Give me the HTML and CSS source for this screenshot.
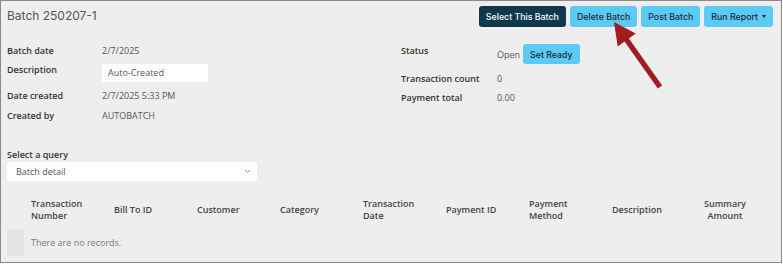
FILE: index.html
```html
<!DOCTYPE html>
<html>
<head>
<meta charset="utf-8">
<link rel="stylesheet" href="styles.css">
</head>
<body>
<div class="frame">
  <div class="topbar">
    <h1 class="title">Batch 250207-1</h1>
    <div class="actions">
      <button class="btn btn-dark">Select This Batch</button>
      <button class="btn btn-light">Delete Batch</button>
      <button class="btn btn-light">Post Batch</button>
      <button class="btn btn-light">Run Report <span class="caret"></span></button>
    </div>
  </div>

  <div class="details">
    <div class="fields fields-left">
      <div class="label r1">Batch date</div><div class="value r1">2/7/2025</div>
      <div class="label r2">Description</div><div class="value r2"><div class="input">Auto-Created</div></div>
      <div class="label r3">Date created</div><div class="value r3">2/7/2025 5:33 PM</div>
      <div class="label r4">Created by</div><div class="value r4">AUTOBATCH</div>
    </div>
    <div class="fields fields-right">
      <div class="label s1">Status</div><div class="value s1 status"><span>Open</span><button class="btn btn-light btn-small">Set Ready</button></div>
      <div class="label s2">Transaction count</div><div class="value s2">0</div>
      <div class="label s3">Payment total</div><div class="value s3">0.00</div>
    </div>
  </div>

  <div class="query">
    <div class="query-label">Select a query</div>
    <div class="select"><span>Batch detail</span><svg class="chev" width="7" height="5" viewBox="0 0 7 5"><path d="M1 1 L3.5 3.5 L6 1" fill="none" stroke="#888" stroke-width="1"/></svg></div>
  </div>

  <div class="table">
    <div class="th"></div>
    <div class="th">Transaction<br>Number</div>
    <div class="th">Bill To ID</div>
    <div class="th">Customer</div>
    <div class="th">Category</div>
    <div class="th">Transaction<br>Date</div>
    <div class="th">Payment ID</div>
    <div class="th">Payment<br>Method</div>
    <div class="th">Description</div>
    <div class="th center">Summary<br>Amount</div>
    <div class="td-box"></div>
    <div class="td-empty">There are no records.</div>
  </div>

  <svg class="arrow" width="783" height="264" viewBox="0 0 783 264">
    <polygon fill="#a31c22" points="614,22 635.7,33.6 628.9,38.4 662.2,85.4 657.8,88.6 624.5,41.6 617.7,46.4"/>
  </svg>
</div>
</body>
</html>
```

FILE: styles.css
```css
* { box-sizing: border-box; }
html, body { margin: 0; padding: 0; background: #ffffff; }
body { font-family: "Open Sans", "Liberation Sans", sans-serif; }

.frame {
  position: relative;
  width: 782px;
  height: 263px;
  border: 1px solid #8a8a8a;
  background: #eeeeee;
  overflow: hidden;
}

.topbar {
  display: flex;
  justify-content: space-between;
  align-items: flex-start;
  padding: 5px 8px 0 6px;
  height: 42px;
}
.title {
  margin: 3px 0 0 0;
  font-family: "Inter", "Liberation Sans", sans-serif;
  font-weight: 400;
  font-size: 12px;
  color: #555555;
  line-height: 14px;
}
.actions { display: flex; gap: 4px; }
.btn {
  font-family: "Inter", "Liberation Sans", sans-serif;
  font-size: 8.8px;
  font-weight: 500;
  height: 21px;
  border: none;
  border-radius: 3px;
  padding: 0 7px;
  cursor: pointer;
  display: flex;
  align-items: center;
}
.btn-dark { background: #0e3a4b; color: #ffffff; }
.btn-light { background: #5bcaf4; color: #1d2b35; }
.caret {
  display: inline-block;
  margin-left: 4px;
  width: 0; height: 0;
  border-left: 2.5px solid transparent;
  border-right: 2.5px solid transparent;
  border-top: 3px solid #1d2b35;
}

.details { display: flex; padding-left: 6px; }
.fields { display: grid; font-size: 9px; }
.fields-left {
  width: 394px;
  grid-template-columns: 95px 1fr;
  grid-template-rows: 16px 27px 20px 19px;
}
.fields-right {
  grid-template-columns: 96px 1fr;
  grid-template-rows: 25px 21px 17px;
}
.label { font-weight: 600; color: #333333; }
.value { color: #555555; }
.r1 { line-height: 16px; }
.r2.label { padding-top: 4px; line-height: 14px; }
.r2.value { padding-top: 5px; }
.r3 { line-height: 20px; }
.r4 { line-height: 19px; }
.input {
  width: 106px;
  height: 18px;
  background: #ffffff;
  border-radius: 2px;
  padding-left: 6px;
  line-height: 18px;
  color: #555555;
}
.s1.label { line-height: 16px; }
.status { display: flex; align-items: flex-start; gap: 3px; }
.status span { line-height: 24px; }
.btn-small { height: 20px; margin-top: 1px; padding: 0 7px; }
.s2 { line-height: 21px; }
.s3 { line-height: 17px; }

.query { padding: 24px 0 0 6px; }
.query-label { font-size: 9px; font-weight: 600; color: #333333; line-height: 12px; }
.select {
  margin-top: 1px;
  width: 250px;
  height: 19px;
  background: #ffffff;
  border-radius: 3px;
  display: flex;
  align-items: center;
  justify-content: space-between;
  padding: 0 6px 0 9px;
  font-size: 9px;
  color: #555555;
}

.table {
  display: grid;
  grid-template-columns: 17px repeat(8, 83px) 74px;
  grid-template-rows: 38px 27px;
  padding: 0 0 0 6px;
  margin-top: 10px;
  font-size: 9px;
}
.th {
  font-weight: 600;
  color: #444444;
  line-height: 12.5px;
  padding-left: 7px;
  display: flex;
  align-items: center;
}
.th.center { justify-content: center; text-align: center; padding-left: 0; }
.td-box { background: #e3e3e3; }
.td-empty {
  grid-column: 2 / -1;
  padding-left: 7px;
  color: #777777;
  line-height: 27px;
}

.arrow { position: absolute; left: -1px; top: -1px; pointer-events: none; }
```
